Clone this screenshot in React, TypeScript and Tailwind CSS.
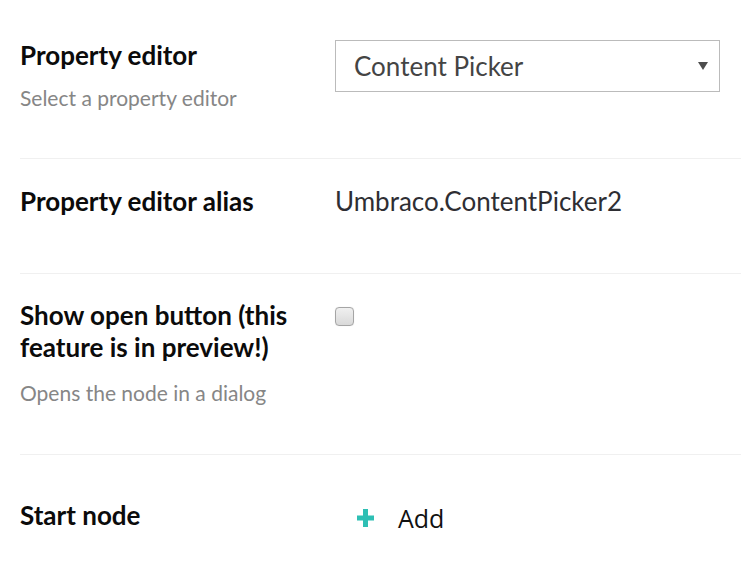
import React from 'react'

const lato = { fontFamily: 'Lato, "Open Sans", sans-serif' }

const Label = ({ children }: { children: React.ReactNode }) => (
  <div className="text-[26px] font-bold leading-[32px] text-[#0b0b0b]">{children}</div>
)

const Desc = ({ children, className = '' }: { children: React.ReactNode; className?: string }) => (
  <div className={`text-[21px] leading-[27px] text-[#868686] ${className}`}>{children}</div>
)

export default function App() {
  return (
    <div className="min-h-screen bg-white pl-[20px]" style={lato}>
      {/* Property editor */}
      <div className="flex border-b border-[#f0f0f0] pt-[39px] pb-[47px]">
        <div className="w-[315px] shrink-0">
          <Label>Property editor</Label>
          <Desc className="mt-[13px]">Select a property editor</Desc>
        </div>
        <div className="pt-[1px]">
          <div className="relative flex h-[52px] w-[385px] items-center border border-[#bbbbbb] bg-white pl-[18px]">
            <span className="text-[26px] leading-[31px] text-[#444444]">Content Picker</span>
            <svg viewBox="0 0 10 8" className="absolute right-[11px] top-[21px] h-[8px] w-[10px]" aria-hidden>
              <path d="M0 0h10L5 8z" fill="#4d4d4d" />
            </svg>
          </div>
        </div>
      </div>

      {/* Alias */}
      <div className="flex border-b border-[#f0f0f0] pt-[26px] pb-[56px]">
        <div className="w-[315px] shrink-0">
          <Label>Property editor alias</Label>
        </div>
        <div className="text-[26px] leading-[32px] text-[#2e2e33]">Umbraco.ContentPicker2</div>
      </div>

      {/* Show open button */}
      <div className="flex border-b border-[#f0f0f0] pt-[25px] pb-[48px]">
        <div className="w-[315px] shrink-0">
          <Label>
            Show open button (this
            <br />
            feature is in preview!)
          </Label>
          <Desc className="mt-[16px]">Opens the node in a dialog</Desc>
        </div>
        <div className="pt-[8px]">
          <div className="h-[19px] w-[19px] rounded-[4px] border border-[#a5a5a5] bg-gradient-to-b from-[#f0f0f0] to-[#d9d9d9] shadow-[0_0_1px_rgba(0,0,0,0.15)]" />
        </div>
      </div>

      {/* Start node */}
      <div className="flex pt-[44px]">
        <div className="w-[315px] shrink-0">
          <Label>Start node</Label>
        </div>
        <div className="flex items-center pt-[3px]">
          <svg viewBox="0 0 17 18" className="ml-[22px] h-[18px] w-[17px]" aria-hidden>
            <path d="M6 0h5v6.5h6v5h-6V18H6v-6.5H0v-5h6z" fill="#2ebfb4" />
          </svg>
          <span
            className="ml-[24px] text-[25px] leading-[32px] text-[#111]"
            style={{ fontFamily: '"Open Sans", sans-serif' }}
          >
            Add
          </span>
        </div>
      </div>
    </div>
  )
}
